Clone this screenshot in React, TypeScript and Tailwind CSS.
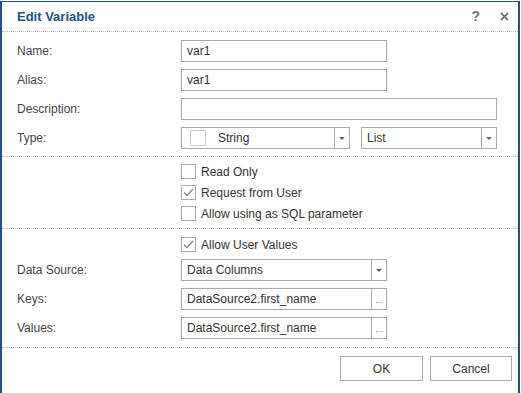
const font = { fontFamily: '"Liberation Sans", Arial, sans-serif' }

function Label({ text }: { text: string }) {
    return <div className="w-[164px] shrink-0 text-[12px] leading-[22px] text-[#444]">{text}</div>
}

function TextBox({ value = '', width }: { value?: string; width: string }) {
    return (
        <div className={`${width} h-[22px] border border-[#aaa] bg-white px-[5px] text-[12px] leading-[20px] text-[#333]`}>
            {value}
        </div>
    )
}

function Arrow() {
    return (
        <svg width="6" height="3" viewBox="0 0 6 3">
            <path d="M0 0h6L3 3z" fill="#666" />
        </svg>
    )
}

function Combo({ value, width, check = false }: { value: string; width: string; check?: boolean }) {
    return (
        <div className={`${width} flex h-[22px] border border-[#aaa] bg-white text-[12px] leading-[20px] text-[#333]`}>
            <div className="flex flex-1 items-center pl-[5px]">
                {check && <div className="mr-[12px] ml-[3px] h-[16px] w-[16px] border border-[#ccc]" />}
                {value}
            </div>
            <div className="flex w-[15px] items-center justify-center border-l border-[#aaa]">
                <Arrow />
            </div>
        </div>
    )
}

function PickBox({ value }: { value: string }) {
    return (
        <div className="flex h-[22px] w-[206px] border border-[#aaa] bg-white text-[12px] leading-[20px] text-[#333]">
            <div className="flex-1 pl-[5px]">{value}</div>
            <div className="flex w-[15px] items-end justify-center border-l border-[#aaa] pb-[4px] text-[9px] leading-none text-[#777]">
                ...
            </div>
        </div>
    )
}

function Check({ label, checked = false }: { label: string; checked?: boolean }) {
    return (
        <div className="flex h-[15px] items-center gap-[5px] text-[12px] text-[#333]">
            <div className="flex h-[15px] w-[15px] items-center justify-center border border-[#aaa] bg-white">
                {checked && (
                    <svg width="11" height="9" viewBox="0 0 11 9">
                        <path d="M1 4.5l3 3L10 1" fill="none" stroke="#888" strokeWidth="1.3" />
                    </svg>
                )}
            </div>
            <span>{label}</span>
        </div>
    )
}

function Sep() {
    return <div className="border-t border-dotted border-[#bbb]" />
}

export default function App() {
    return (
        <div className="h-[393px] w-[521px] overflow-hidden bg-white pt-[1px]" style={font}>
            <div className="h-[420px] w-[520px] border-t border-r-2 border-l-2 border-[#1f4f8f] bg-white">
                {/* header */}
                <div className="flex h-[29px] items-center pl-[15px] pr-[8px]">
                    <div className="flex-1 text-[13px] font-bold text-[#23508f]">Edit Variable</div>
                    <span className="mr-[20px] text-[14px] font-bold text-[#777]">?</span>
                    <svg width="9" height="9" viewBox="0 0 9 9" className="mr-[1px]">
                        <path d="M1 1l7 7M8 1L1 8" stroke="#777" strokeWidth="1.8" />
                    </svg>
                </div>
                <Sep />

                <div className="flex flex-col gap-[7px] pt-[8px] pb-[7px] pl-[15px]">
                    <div className="flex">
                        <Label text="Name:" />
                        <TextBox value="var1" width="w-[206px]" />
                    </div>
                    <div className="flex">
                        <Label text="Alias:" />
                        <TextBox value="var1" width="w-[206px]" />
                    </div>
                    <div className="flex">
                        <Label text="Description:" />
                        <TextBox width="w-[316px]" />
                    </div>
                    <div className="flex">
                        <Label text="Type:" />
                        <div className="flex gap-[11px]">
                            <Combo value="String" width="w-[169px]" check />
                            <Combo value="List" width="w-[136px]" />
                        </div>
                    </div>
                </div>
                <Sep />

                <div className="flex flex-col gap-[6px] pt-[7px] pb-[7px] pl-[179px]">
                    <Check label="Read Only" />
                    <Check label="Request from User" checked />
                    <Check label="Allow using as SQL parameter" />
                </div>
                <Sep />

                <div className="flex flex-col gap-[7px] pt-[8px] pb-[8px] pl-[15px]">
                    <div className="pl-[164px]">
                        <Check label="Allow User Values" checked />
                    </div>
                    <div className="flex">
                        <Label text="Data Source:" />
                        <Combo value="Data Columns" width="w-[206px]" />
                    </div>
                    <div className="flex">
                        <Label text="Keys:" />
                        <PickBox value="DataSource2.first_name" />
                    </div>
                    <div className="flex">
                        <Label text="Values:" />
                        <PickBox value="DataSource2.first_name" />
                    </div>
                </div>
                <Sep />

                <div className="flex justify-end gap-[7px] pt-[8px] pr-[6px]">
                    <button className="h-[25px] w-[83px] border border-[#aaa] bg-white text-[12px] text-[#333]">OK</button>
                    <button className="h-[25px] w-[82px] border border-[#aaa] bg-white text-[12px] text-[#333]">Cancel</button>
                </div>
            </div>
        </div>
    )
}
